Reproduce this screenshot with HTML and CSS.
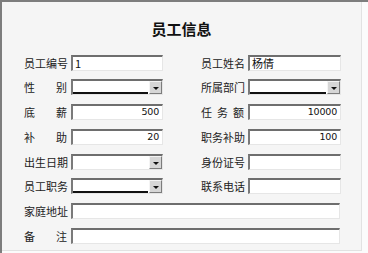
FILE: index.html
```html
<!DOCTYPE html>
<html lang="zh">
<head>
<meta charset="utf-8">
<title>员工信息</title>
<link rel="stylesheet" href="styles.css">
</head>
<body>
<div class="frame">
  <div class="panel">
    <h1 class="title">员工信息</h1>
    <div class="form">
      <div class="row tight">
        <div class="pair"><span class="label">员工编号</span><span class="input w92">1</span></div>
        <div class="pair right"><span class="label">员工姓名</span><span class="input w93">杨倩</span></div>
      </div>
      <div class="row">
        <div class="pair"><span class="label just"><i>性</i><i>别</i></span><span class="select w92 line"><span class="sel-text"></span><span class="btn"><span class="tri"></span></span></span></div>
        <div class="pair right"><span class="label">所属部门</span><span class="select w93 line"><span class="sel-text"></span><span class="btn"><span class="tri"></span></span></span></div>
      </div>
      <div class="row">
        <div class="pair"><span class="label just"><i>底</i><i>薪</i></span><span class="input w92 num">500</span></div>
        <div class="pair right"><span class="label just"><i>任</i><i>务</i><i>额</i></span><span class="input w93 num">10000</span></div>
      </div>
      <div class="row">
        <div class="pair"><span class="label just"><i>补</i><i>助</i></span><span class="input w92 num">20</span></div>
        <div class="pair right"><span class="label">职务补助</span><span class="input w93 num">100</span></div>
      </div>
      <div class="row tight">
        <div class="pair"><span class="label">出生日期</span><span class="select w92"><span class="sel-text"></span><span class="btn"><span class="tri"></span></span></span></div>
        <div class="pair right"><span class="label">身份证号</span><span class="input w93"></span></div>
      </div>
      <div class="row">
        <div class="pair"><span class="label">员工职务</span><span class="select w92 line"><span class="sel-text"></span><span class="btn"><span class="tri"></span></span></span></div>
        <div class="pair right"><span class="label">联系电话</span><span class="input w93"></span></div>
      </div>
      <div class="row">
        <div class="pair"><span class="label">家庭地址</span><span class="input wfull"></span></div>
      </div>
      <div class="row">
        <div class="pair"><span class="label just"><i>备</i><i>注</i></span><span class="input wfull"></span></div>
      </div>
    </div>
  </div>
</div>
</body>
</html>
```
FILE: styles.css
```css
html, body {
  margin: 0;
  padding: 0;
  background: #ffffff;
}
body {
  width: 368px;
  height: 253px;
  overflow: hidden;
  font-family: "Noto Sans CJK SC", "Noto Sans", sans-serif;
  color: #1e1e1e;
}
.frame {
  border-top: 2px solid #7d7d7d;
  border-left: 2px solid #7d7d7d;
  height: 251px;
  background: #fbfbfb;
}
.panel {
  width: 359px;
  height: 248px;
  background: #f5f5f5;
  border-right: 1px solid #e2e2e2;
  border-bottom: 1px solid #e2e2e2;
  box-sizing: content-box;
}
.title {
  margin: 0;
  padding-top: 17px;
  height: 20px;
  line-height: 20px;
  text-align: center;
  font-size: 15px;
  font-weight: bold;
  color: #111;
}
.form {
  padding-top: 16px;
  padding-left: 22px;
}
.row {
  display: flex;
  height: 16px;
  margin-bottom: 9px;
}
.row.tight {
  margin-bottom: 8px;
}
.pair {
  display: flex;
  align-items: center;
  gap: 4px;
}
.pair.right {
  margin-left: 38px;
}
.label {
  width: 43px;
  font-size: 11px;
  line-height: 16px;
  white-space: nowrap;
  color: #222;
}
.label.just {
  display: flex;
  justify-content: space-between;
}
.label i {
  font-style: normal;
}
.input, .select {
  box-sizing: border-box;
  height: 16px;
  background: #ffffff;
  border-style: solid;
  border-width: 2px 1px 1px 2px;
  border-color: #6e6e6e #e6e6e6 #e6e6e6 #7a7a7a;
  font-size: 11px;
  line-height: 12px;
  padding: 0 2px;
  color: #111;
  display: block;
  overflow: hidden;
  white-space: nowrap;
}
.input.num {
  text-align: right;
  font-family: "DejaVu Sans", sans-serif;
  font-size: 9.5px;
  letter-spacing: -0.2px;
  padding-right: 3px;
}
.w92 { width: 92px; }
.w93 { width: 93px; }
.wfull { width: 269px; }
.select {
  display: flex;
  padding: 0;
}
.sel-text {
  flex: 1;
  height: 100%;
  box-sizing: border-box;
}
.select.line .sel-text {
  border-bottom: 2px solid #111;
  margin-right: 1px;
}
.btn {
  width: 13px;
  height: 13px;
  box-sizing: border-box;
  background: #d6d6d6;
  border-style: solid;
  border-width: 1px;
  border-color: #f4f4f4 #7c7c7c #7c7c7c #f4f4f4;
  display: flex;
  align-items: center;
  justify-content: center;
}
.tri {
  width: 0;
  height: 0;
  border-left: 3px solid transparent;
  border-right: 3px solid transparent;
  border-top: 3px solid #111;
  margin-top: 1px;
}
```
